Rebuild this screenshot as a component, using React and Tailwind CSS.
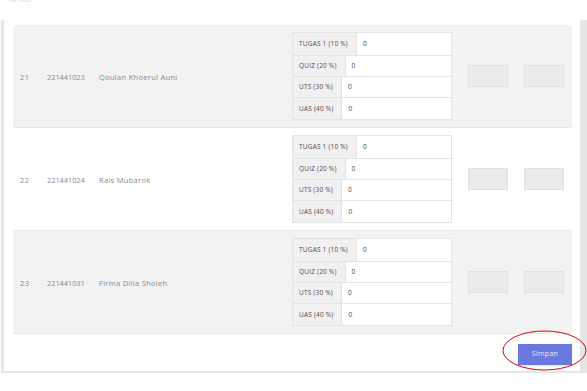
import React from 'react';

const students = [
  { no: 21, nim: '221441023', nama: 'Qoulan Khoerul Auni', bg: 'bg-[#f2f2f2]' },
  { no: 22, nim: '221441024', nama: 'Rais Mubarok', bg: 'bg-white' },
  { no: 23, nim: '221441031', nama: 'Firma Dilla Sholeh', bg: 'bg-[#f2f2f2]' },
];

const komponen = ['TUGAS 1 (10 %)', 'QUIZ (20 %)', 'UTS (30 %)', 'UAS (40 %)'];

const NilaiInput = () => (
  <div className="w-[160px] border border-[#e3e3e3]">
    {komponen.map((label, i) => (
      <div key={label} className={`flex h-[21.3px] ${i > 0 ? 'border-t border-[#e3e3e3]' : ''}`}>
        <div className="flex items-center pl-[6px] pr-[8px] bg-[#f0f0f0] border-r border-[#e3e3e3] text-[6.5px] tracking-[0.2px] text-[#5a4848]">
          {label}
        </div>
        <div className="flex-1 flex items-center bg-white px-[6px] text-[6.5px] text-[#444]">0</div>
      </div>
    ))}
  </div>
);

const App = () => {
  return (
    <div className="w-[587px] h-[391px] bg-white overflow-hidden relative" style={{ fontFamily: '"Open Sans", "Liberation Sans", sans-serif' }}>
      {/* cut-off note at the top */}
      <div className="h-[20px] overflow-hidden">
        <p className="-mt-[5px] pl-[3px] text-[7px] text-[#d4d4d4]">* Isi nilai</p>
      </div>

      {/* Card */}
      <div className="ml-[1px] w-[586px] border-l-[3px] border-r-[7px] border-b-[2px] border-[#e6e6e6] bg-white pl-[9px] pr-[8px] pt-[5px] pb-[6px]">
        {students.map((s) => (
          <div key={s.no} className={`flex items-center h-[103px] pt-[3px] border-b border-[#e8e8e8] ${s.bg} text-[7.5px] text-[#8a8a8a]`}>
            <div className="w-[34px] pl-[7px] tracking-[0.4px]">{s.no}</div>
            <div className="w-[52px] tracking-[-0.1px]">{s.nim}</div>
            <div className="w-[193px] tracking-[0.3px]">{s.nama}</div>
            <div className="-mt-[3px] flex items-center">
              <NilaiInput />
              <div className="ml-[16px] w-[40px] h-[22px] bg-[#ebebeb] border border-[#e0e0e0]"></div>
              <div className="ml-[16px] w-[40px] h-[22px] bg-[#ebebeb] border border-[#e0e0e0]"></div>
            </div>
          </div>
        ))}

        {/* Simpan button */}
        <div className="flex justify-end pt-[10px]">
          <button className="w-[54px] h-[21px] bg-[#6a79e0] text-[7px] tracking-[0.3px] text-[#e8eaff] shadow-sm">
            Simpan
          </button>
        </div>
      </div>

      {/* Red highlight ellipse */}
      <svg className="absolute left-[502px] top-[330px]" width="85" height="41" viewBox="0 0 85 41">
        <ellipse cx="42.5" cy="20.5" rx="41.5" ry="19.5" fill="none" stroke="#e00000" strokeWidth="1" />
      </svg>
    </div>
  );
};

export default App;
